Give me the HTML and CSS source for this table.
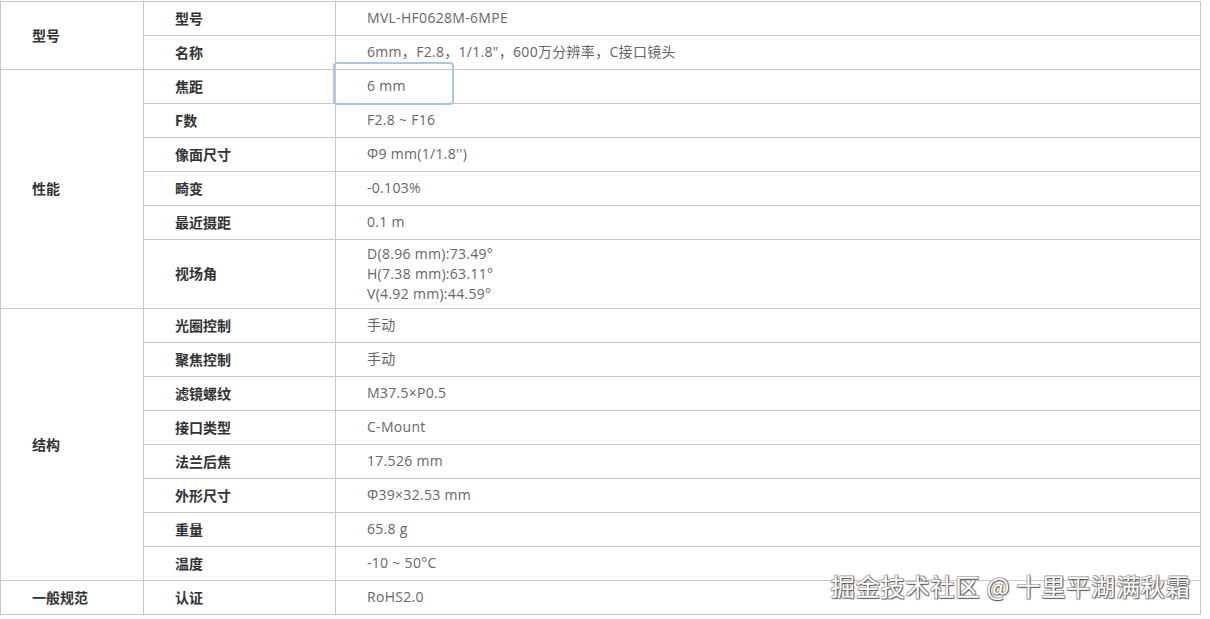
FILE: index.html
```html
<!DOCTYPE html>
<html lang="zh-CN">
<head>
<meta charset="utf-8">
<title>MVL-HF0628M-6MPE</title>
<link rel="stylesheet" href="styles.css">
</head>
<body>
<div class="wrap">
<table class="spec">
  <colgroup><col class="c1"><col class="c2"><col class="c3"></colgroup>
  <tbody>
    <tr><th class="grp" rowspan="2">型号</th><th class="lbl">型号</th><td class="val">MVL-HF0628M-6MPE</td></tr>
    <tr><th class="lbl">名称</th><td class="val">6mm，F2.8，1/1.8"，600万分辨率，C接口镜头</td></tr>
    <tr><th class="grp" rowspan="6">性能</th><th class="lbl">焦距</th><td class="val">6 mm</td></tr>
    <tr><th class="lbl">F数</th><td class="val">F2.8 ~ F16</td></tr>
    <tr><th class="lbl">像面尺寸</th><td class="val">Φ9 mm(1/1.8'')</td></tr>
    <tr><th class="lbl">畸变</th><td class="val">-0.103%</td></tr>
    <tr><th class="lbl">最近摄距</th><td class="val">0.1 m</td></tr>
    <tr><th class="lbl">视场角</th><td class="val multi">D(8.96 mm):73.49°<br>H(7.38 mm):63.11°<br>V(4.92 mm):44.59°</td></tr>
    <tr><th class="grp" rowspan="8">结构</th><th class="lbl">光圈控制</th><td class="val">手动</td></tr>
    <tr><th class="lbl">聚焦控制</th><td class="val">手动</td></tr>
    <tr><th class="lbl">滤镜螺纹</th><td class="val">M37.5×P0.5</td></tr>
    <tr><th class="lbl">接口类型</th><td class="val">C-Mount</td></tr>
    <tr><th class="lbl">法兰后焦</th><td class="val">17.526 mm</td></tr>
    <tr><th class="lbl">外形尺寸</th><td class="val">Φ39×32.53 mm</td></tr>
    <tr><th class="lbl">重量</th><td class="val">65.8 g</td></tr>
    <tr><th class="lbl">温度</th><td class="val">-10 ~ 50°C</td></tr>
    <tr><th class="grp">一般规范</th><th class="lbl">认证</th><td class="val">RoHS2.0</td></tr>
  </tbody>
</table>
<div class="focus"></div>
<div class="watermark">掘金技术社区 @ 十里平湖满秋霜</div>
</div>
</body>
</html>
```
FILE: styles.css
```css
html, body {
  margin: 0;
  padding: 0;
  background: #fff;
}
body {
  font-family: "Open Sans", "Noto Sans CJK SC", sans-serif;
  font-size: 14px;
  color: #666;
}
.wrap {
  position: relative;
  padding-top: 1px;
  width: 1200px;
}
.spec {
  border-collapse: collapse;
  width: 1200px;
  table-layout: fixed;
}
.c1 { width: 143px; }
.c2 { width: 192px; }
.c3 { width: 865px; }
.spec th, .spec td {
  border: 1px solid #c8c8c8;
  padding: 3px 31px 5px 31px;
  height: 25px;
  line-height: 20px;
  text-align: left;
  vertical-align: middle;
}
.spec .multi {
  padding-top: 4px;
  padding-bottom: 4px;
}
.spec th {
  font-family: "Noto Sans CJK SC", sans-serif;
  font-weight: bold;
  color: #333;
}
.spec .val {
  color: #666;
  letter-spacing: 0.3px;
}
.focus {
  position: absolute;
  left: 333px;
  top: 62px;
  width: 117px;
  height: 39px;
  border: 2px solid #a3c8ea;
  border-radius: 4px;
}
.watermark {
  position: absolute;
  left: 831px;
  top: 571px;
  font-family: "Noto Sans CJK SC", sans-serif;
  font-size: 24px;
  line-height: 30px;
  letter-spacing: 0.9px;
  color: #fff;
  text-shadow: 1px 1px 1px #555, -1px -1px 0 #bbb, 1px -1px 0 #999, -1px 1px 0 #999;
  white-space: nowrap;
}
```
